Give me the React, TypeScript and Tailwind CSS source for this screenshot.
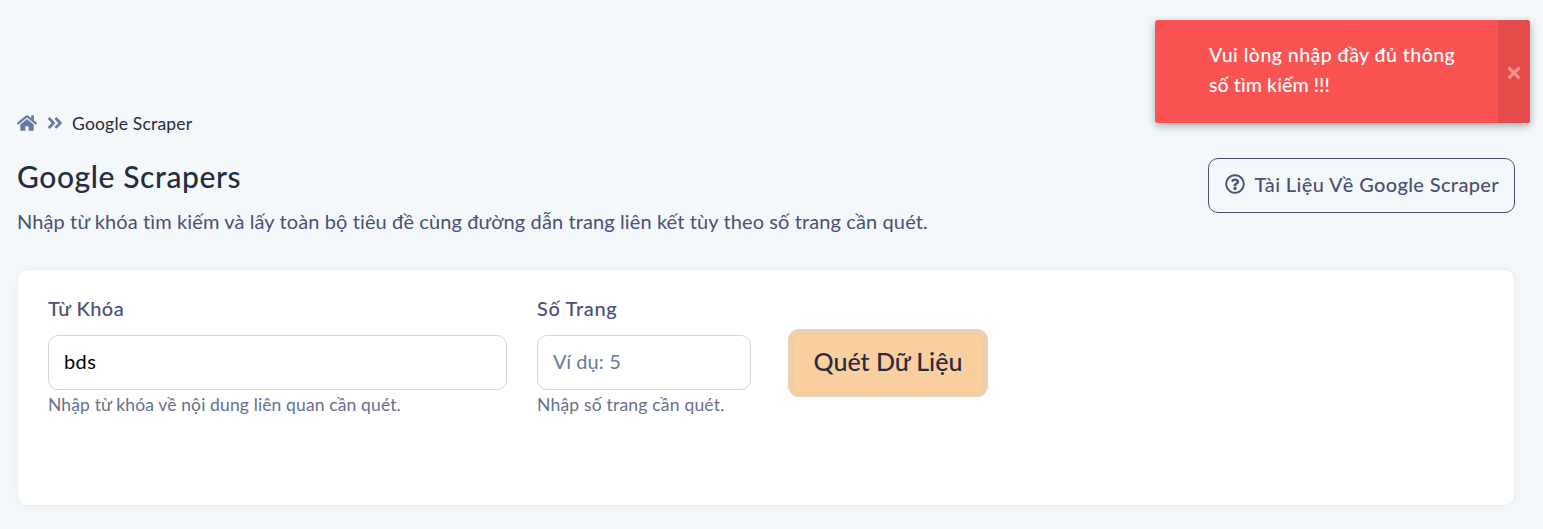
import { FaAngleDoubleRight, FaHome, FaRegQuestionCircle, FaTimes } from "react-icons/fa";

function Breadcrumb() {
  return (
    <nav className="flex h-6 items-center text-[#69799f]">
      <FaHome className="mb-[2px] h-[18px] w-5" />
      <FaAngleDoubleRight className="mb-[2px] ml-[10px] h-[18px] w-4" />
      <span className="ml-[9px] text-[17.5px] leading-6 tracking-[0.2px] whitespace-nowrap text-[#262b40]">
        Google Scraper
      </span>
    </nav>
  );
}

function Toast() {
  return (
    <div
      role="alert"
      className="absolute top-5 right-[13px] flex h-[103px] w-[375px] overflow-hidden rounded-[3px] bg-[#fb5252] shadow-[0_3px_8px_rgba(0,0,0,0.3)]"
    >
      <p className="flex-1 pt-5 pl-[54px] text-[19.5px] leading-[30px] font-medium tracking-[0.46px] whitespace-nowrap text-white">
        Vui lòng nhập đầy đủ thông
        <br />
        <span className="tracking-[0.1px]">số tìm kiếm !!!</span>
      </p>
      <button aria-label="Close" className="flex w-8 items-center justify-center bg-[#e54b4b] pt-[2px] text-[#f29090]">
        <FaTimes className="size-[18px]" />
      </button>
    </div>
  );
}

export default function App() {
  return (
    <div className="relative h-[529px] w-full overflow-hidden bg-[#f4f8fb] pt-28 pr-7 pl-[17px] font-['Lato','Noto_Sans',sans-serif] text-[#4a5073]">
      <Breadcrumb />
      <header className="flex justify-between pt-[22px]">
        <div className="-mt-px">
          <h1 className="text-[30px] leading-[38px] font-medium tracking-[0.6px] whitespace-nowrap text-[#262b40]">
            Google Scrapers
          </h1>
          <p className="mt-[11px] text-[20px] leading-[30px] tracking-[0.11px] whitespace-nowrap">
            Nhập từ khóa tìm kiếm và lấy toàn bộ tiêu đề cùng đường dẫn trang liên kết tùy theo số trang cần quét.
          </p>
        </div>
        <button className="flex h-[55px] w-[307px] items-center rounded-[10px] border border-[#4a5073] pl-[15.5px] text-[20px] font-medium tracking-[0.36px] whitespace-nowrap">
          <FaRegQuestionCircle className="mb-[3px] size-5" />
          <span className="mb-[4px] ml-[10px]">Tài Liệu Về Google Scraper</span>
        </button>
      </header>
      <main className="mt-[33px] flex h-[237px] rounded-[10px] border border-[#e9edf1] bg-white pt-[23px] pl-[30px] shadow-[0_2px_18px_rgba(0,0,0,0.03)]">
        <div className="w-[459px]">
          <label htmlFor="keyword" className="block text-[20px] leading-[30px] font-medium tracking-[0.45px]">
            Từ Khóa
          </label>
          <input
            id="keyword"
            defaultValue="bds"
            className="mt-3 block h-[55px] w-full rounded-[10px] border border-[#d1d7e0] px-[15px] pb-[3px] text-[20px] tracking-[0.4px] text-black"
          />
          <p className="mt-[2px] text-[17.5px] leading-[26px] tracking-[0.13px] whitespace-nowrap text-[#66708f]">
            Nhập từ khóa về nội dung liên quan cần quét.
          </p>
        </div>
        <div className="ml-[30px] w-[214px]">
          <label htmlFor="pages" className="block text-[20px] leading-[30px] font-medium tracking-[0.65px]">
            Số Trang
          </label>
          <input
            id="pages"
            placeholder="Ví dụ: 5"
            className="mt-3 block h-[55px] w-full rounded-[10px] border border-[#d1d7e0] px-[15px] pb-[3px] text-[20px] tracking-[0.1px] placeholder:text-[#66799e]"
          />
          <p className="mt-[2px] text-[17.5px] leading-[26px] tracking-[0.2px] whitespace-nowrap text-[#66708f]">
            Nhập số trang cần quét.
          </p>
        </div>
        <button className="mt-10 ml-[41px] h-[60px] w-[192px] rounded-[7px] border border-[#f8c998] bg-[#f9cf9f] pb-[2px] text-[25px] font-medium whitespace-nowrap text-[#262b40] shadow-[0_0_0_4px_#ebd0b3,inset_0_1px_2px_rgba(0,0,0,0.04)]">
          Quét Dữ Liệu
        </button>
      </main>
      <Toast />
    </div>
  );
}
